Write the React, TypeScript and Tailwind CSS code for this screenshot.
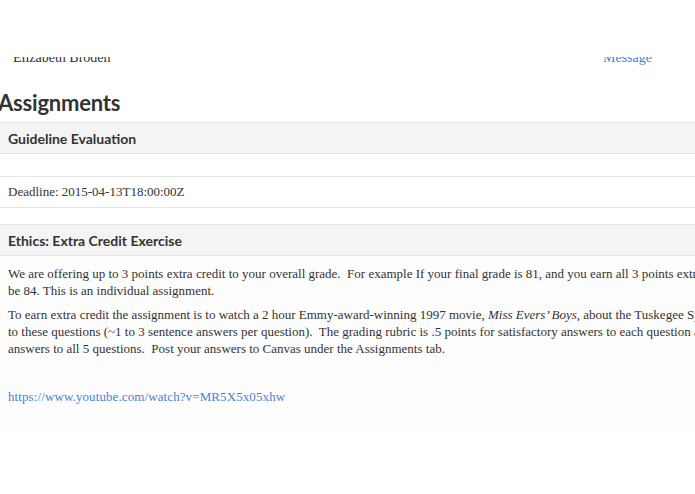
import React from 'react';

export default function App() {
  return (
    <div className="w-[695px] h-[494px] overflow-hidden bg-white text-[#333]">
      {/* top strip, partly hidden */}
      <div className="pt-[57px] flex h-[66px]">
        <div className="h-[9px] overflow-hidden pl-[13px] w-[590px]">
          <div className="-mt-[7px] text-[14px] leading-[16px] font-['Liberation_Serif',serif]">Elizabeth Broden</div>
        </div>
        <div className="h-[9px] overflow-hidden">
          <div className="-mt-[7px] text-[14px] leading-[16px] text-[#4a7fd4] pl-[13px] font-['Liberation_Serif',serif]">Message</div>
        </div>
      </div>

      <div className="w-[900px]">
        <h1 className="-ml-[2px] pt-[20px] pb-[2px] text-[22px] leading-[34px] font-bold font-['Lato',sans-serif] tracking-[-0.2px]">
          Assignments
        </h1>

        <section>
          <div className="h-[32px] flex items-center px-2 bg-[#f4f4f4] border-y border-[#e3e3e3]">
            <h2 className="text-[14px] font-bold font-['Lato',sans-serif]">Guideline Evaluation</h2>
          </div>
          <div className="h-[22px]" />
          <div className="h-[32px] flex items-center px-2 border-y border-[#e6e6e6] text-[13px] font-['Liberation_Serif',serif]">
            Deadline: 2015-04-13T18:00:00Z
          </div>
        </section>

        <section className="mt-[16px]">
          <div className="h-[32px] flex items-center px-2 bg-[#f4f4f4] border-y border-[#e3e3e3]">
            <h2 className="text-[14px] font-bold font-['Lato',sans-serif]">Ethics: Extra Credit Exercise</h2>
          </div>
          <div className="bg-[#fdfdfd] px-2 pt-[9px] h-[174px] text-[13px] leading-[17px] font-['Liberation_Serif',serif] whitespace-pre">
            <p>
              {'We are offering up to 3 points extra credit to your overall grade.  For example If your final grade is 81, and you earn all 3 points extra credit, your final grade would'}
              <br />
              {'be 84. This is an individual assignment.'}
            </p>
            <p className="mt-[7px]">
              {'To earn extra credit the assignment is to watch a 2 hour Emmy-award-winning 1997 movie, '}
              <i>Miss Evers’ Boys</i>
              {', about the Tuskegee Syphilis Study, and answer'}
              <br />
              {'to these questions (~1 to 3 sentence answers per question).  The grading rubric is .5 points for satisfactory answers to each question and 1 point for'}
              <br />
              {'answers to all 5 questions.  Post your answers to Canvas under the Assignments tab.'}
            </p>
            <p className="mt-[31px]">
              <a className="text-[#4a7fd4] tracking-[0.1px]">https://www.youtube.com/watch?v=MR5X5x05xhw</a>
            </p>
          </div>
        </section>
      </div>
    </div>
  );
}
